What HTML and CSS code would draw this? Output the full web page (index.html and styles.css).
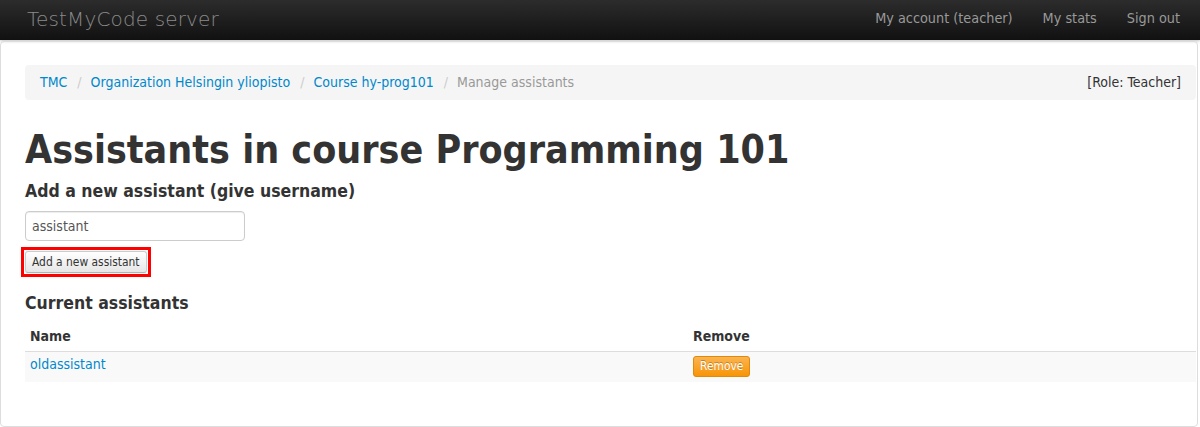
FILE: index.html
```html
<!DOCTYPE html>
<html>
<head>
<meta charset="utf-8">
<link rel="stylesheet" href="styles.css">
</head>
<body>
<div class="navbar">
  <a class="brand" href="#">TestMyCode server</a>
  <ul class="nav">
    <li><a href="#">My account (teacher)</a></li>
    <li><a href="#">My stats</a></li>
    <li><a href="#">Sign out</a></li>
  </ul>
</div>
<div class="page">
  <div class="breadcrumb">
    <ul class="crumbs">
      <li><a href="#">TMC</a><span class="divider">/</span></li>
      <li><a href="#">Organization Helsingin yliopisto</a><span class="divider">/</span></li>
      <li><a href="#">Course hy-prog101</a><span class="divider">/</span></li>
      <li class="active">Manage assistants</li>
    </ul>
    <div class="role">[Role: Teacher]</div>
  </div>
  <h1>Assistants in course Programming 101</h1>
  <h3>Add a new assistant (give username)</h3>
  <form class="add-form">
    <input class="text-input" type="text" value="assistant">
    <div class="highlight"><button class="btn" type="button">Add a new assistant</button></div>
  </form>
  <h3 class="current">Current assistants</h3>
  <table class="table">
    <thead>
      <tr><th class="col-name">Name</th><th>Remove</th></tr>
    </thead>
    <tbody>
      <tr><td><a href="#">oldassistant</a></td><td class="action-cell"><button class="btn-warning" type="button">Remove</button></td></tr>
    </tbody>
  </table>
</div>
</body>
</html>
```
FILE: styles.css
```css
html, body {
  margin: 0;
  padding: 0;
  background: #fff;
}
body {
  font-family: "DejaVu Sans Condensed", "DejaVu Sans", sans-serif;
  font-size: 14px;
  line-height: 20px;
  color: #333;
}
a {
  color: #0088cc;
  text-decoration: none;
}
.navbar {
  height: 40px;
  background: linear-gradient(#2c2c2c, #111);
  display: flex;
  align-items: center;
  justify-content: space-between;
  padding: 0 0 0 27px;
  box-shadow: 0 1px 3px rgba(0,0,0,.25);
}
.brand {
  font-family: "DejaVu Sans", sans-serif;
  font-weight: 200;
  font-size: 20px;
  letter-spacing: 0.15px;
  color: #8a8a8a;
  margin-top: -3px;
}
.nav {
  list-style: none;
  margin: 0;
  padding: 0;
  display: flex;
}
.nav a {
  display: block;
  padding: 8px 15px 12px;
  color: #999;
  font-size: 14.3px;
}
.nav li:last-child a {
  padding-right: 20px;
}
.page {
  margin-top: 1px;
  width: 1171px;
  border: 1px solid #ddd;
  border-radius: 4px;
  padding: 23px 1px 44px 24px;
}
.breadcrumb {
  background: #f5f5f5;
  border-radius: 4px;
  padding: 7px 15px 8px;
  display: flex;
  justify-content: space-between;
  font-size: 14px;
}
.crumbs {
  list-style: none;
  margin: 0;
  padding: 0;
  display: flex;
}
.divider {
  color: #ccc;
  padding: 0 9px 0 10px;
}
.active {
  color: #999;
}
.role {
  color: #333;
}
h1 {
  font-size: 39px;
  line-height: 40px;
  margin: 30px 0 11px;
  font-weight: bold;
}
h3 {
  font-size: 17.5px;
  line-height: 20px;
  margin: 0 0 10px;
  font-weight: bold;
}
.add-form {
  margin: 0 0 16px;
}
.text-input {
  display: block;
  box-sizing: border-box;
  width: 220px;
  height: 30px;
  padding: 4px 6px;
  border: 1px solid #ccc;
  border-radius: 4px;
  font-family: inherit;
  font-size: 14px;
  color: #555;
  box-shadow: inset 0 1px 1px rgba(0,0,0,.075);
  margin: 0 0 6px;
}
.highlight {
  display: flex;
  width: fit-content;
  border: 3px solid #ff0000;
  margin-left: -4px;
  padding: 1px;
}
.btn {
  font-family: inherit;
  font-size: 11.9px;
  line-height: 16px;
  height: 22px;
  padding: 2px 6px;
  color: #333;
  background: linear-gradient(#fff, #e6e6e6);
  border: 1px solid #ccc;
  border-bottom-color: #b3b3b3;
  border-radius: 3px;
  box-shadow: inset 0 1px 0 rgba(255,255,255,.2), 0 1px 2px rgba(0,0,0,.05);
}
.current {
  margin-bottom: 9px;
}
.table {
  width: 100%;
  border-collapse: collapse;
}
.table th, .table td {
  text-align: left;
  vertical-align: top;
}
.table th {
  font-weight: bold;
  padding: 4px 5px 5px;
}
.col-name {
  width: 653px;
}
.table tbody td {
  border-top: 1px solid #ddd;
  background: #f9f9f9;
  padding: 2px 5px 8px;
}
.table tbody td.action-cell {
  padding: 4px 5px 5px;
}
.btn-warning {
  display: block;
  font-family: inherit;
  font-size: 11.9px;
  line-height: 15px;
  height: 21px;
  padding: 2px 6px;
  color: #fff;
  background: linear-gradient(#fbb450, #f89406);
  border: 1px solid #e08a0a;
  border-radius: 3px;
  text-shadow: 0 -1px 0 rgba(0,0,0,.25);
}
```
